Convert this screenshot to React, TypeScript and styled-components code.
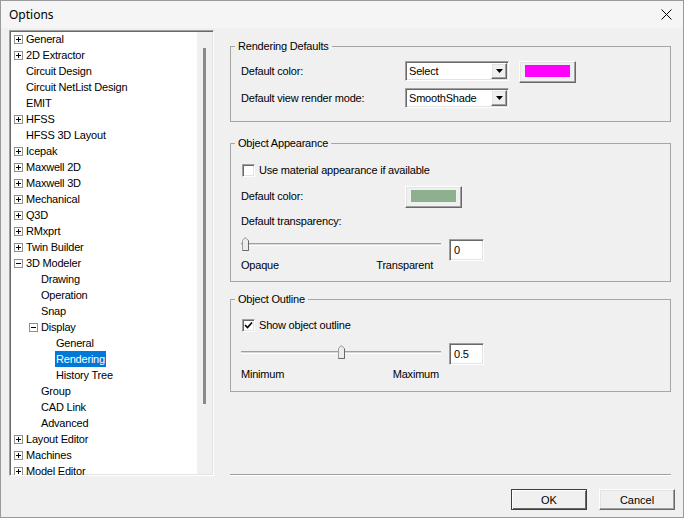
import React from 'react';
import styled, { createGlobalStyle, css } from 'styled-components';

const GlobalStyle = createGlobalStyle`
  html, body {
    margin: 0;
    padding: 0;
    background: #f0f0f0;
  }
  body {
    font-family: 'Liberation Sans', Arial, sans-serif;
    font-size: 11px;
    letter-spacing: -0.2px;
    color: #000;
  }
  * {
    box-sizing: border-box;
  }
`;

const raised = css`
  border: 1px solid;
  border-color: #fff #696969 #696969 #fff;
  box-shadow: inset -1px -1px #a0a0a0, inset 1px 1px #e3e3e3;
  background: #f0f0f0;
`;

const sunken = css`
  border: 1px solid;
  border-color: #a0a0a0 #fff #fff #a0a0a0;
  box-shadow: inset 1px 1px #696969, inset -1px -1px #e3e3e3;
  background: #fff;
`;

const Window = styled.div`
  width: 684px;
  height: 518px;
  border: 1px solid #9a9a9a;
  background: #f0f0f0;
  display: flex;
  flex-direction: column;
`;

const TitleBar = styled.div`
  height: 27px;
  flex: none;
  display: flex;
  align-items: center;
  justify-content: space-between;
  padding: 0 11px 0 8px;
  background: #f5f5f5;
  font-family: 'Noto Sans', 'Liberation Sans', sans-serif;
  font-size: 12px;
  letter-spacing: 0;
`;

const Main = styled.div`
  flex: none;
  height: 448px;
  display: flex;
  padding: 2px 12px 0 8px;
`;

/* ---------- tree ---------- */

const TreePanel = styled.div`
  ${sunken};
  width: 205px;
  height: 446px;
  display: flex;
  overflow: hidden;
`;

const TreeList = styled.div`
  flex: 1;
  overflow: hidden;
`;

const ScrollTrack = styled.div`
  width: 15px;
  flex: none;
  background: #f0f0f0;
  margin: 1px 1px 1px 0;
`;

const ScrollThumb = styled.div`
  width: 3px;
  height: 356px;
  margin: 16px 0 0 6px;
  background: #8a8a8a;
`;

const TreeRow = styled.div<{ $level: number }>`
  height: 16px;
  display: flex;
  align-items: center;
  white-space: nowrap;
  padding-left: ${(p) => 4 + p.$level * 15}px;
`;

const ExpanderSlot = styled.span`
  width: 12px;
  flex: none;
  display: flex;
  align-items: center;
`;

const TreeText = styled.span<{ $selected?: boolean }>`
  line-height: 16px;
  padding: 0 1px;
  margin-left: -1px;
  background: ${(p) => (p.$selected ? '#0078d7' : 'transparent')};
  color: ${(p) => (p.$selected ? '#fff' : '#000')};
`;

/* ---------- right side ---------- */

const RightCol = styled.div`
  width: 441px;
  margin-left: 16px;
  padding-top: 16px;
  display: flex;
  flex-direction: column;
`;

const GroupBox = styled.div<{ $pad: string; $top?: number }>`
  position: relative;
  border: 1px solid #a6a6a6;
  padding: ${(p) => p.$pad};
  margin-top: ${(p) => p.$top ?? 0}px;
`;

const GroupTitle = styled.span`
  position: absolute;
  top: -7px;
  left: 4px;
  padding: 0 3px;
  line-height: 13px;
  background: #f0f0f0;
`;

const FieldRow = styled.div<{ $height: number; $top?: number }>`
  display: flex;
  align-items: flex-start;
  height: ${(p) => p.$height}px;
  margin-top: ${(p) => p.$top ?? 0}px;
`;

const FieldLabel = styled.span<{ $width?: number }>`
  width: ${(p) => (p.$width ? `${p.$width}px` : 'auto')};
  flex: none;
  line-height: 20px;
`;

const PlainLabel = styled.div<{ $top?: number }>`
  line-height: 14px;
  margin-top: ${(p) => p.$top ?? 0}px;
`;

const Combo = styled.div`
  ${sunken};
  width: 104px;
  height: 20px;
  display: flex;
  padding: 1px;
`;

const ComboText = styled.span`
  flex: 1;
  padding-left: 2px;
  line-height: 16px;
`;

const ComboArrow = styled.span`
  ${raised};
  width: 16px;
  height: 16px;
  display: flex;
  align-items: center;
  justify-content: center;
`;

const ColorButton = styled.div<{ $left?: number }>`
  ${raised};
  width: 57px;
  height: 22px;
  padding: 3px 5px 5px 5px;
  margin-left: ${(p) => p.$left ?? 0}px;
`;

const Swatch = styled.div<{ $color: string }>`
  width: 100%;
  height: 100%;
  background: ${(p) => p.$color};
`;

const CheckRow = styled.label`
  display: flex;
  align-items: center;
  height: 14px;
  gap: 4px;
  padding-left: 1px;
`;

const CheckBox = styled.span`
  ${sunken};
  width: 13px;
  height: 13px;
  display: flex;
  align-items: center;
  justify-content: center;
`;

const SliderRow = styled.div<{ $top: number }>`
  display: flex;
  align-items: flex-start;
  margin-top: ${(p) => p.$top}px;
`;

const SliderCol = styled.div<{ $offset: number }>`
  width: 200px;
  padding-top: ${(p) => p.$offset}px;
`;

const Slider = styled.div`
  position: relative;
  height: 16px;
  padding-top: 6px;
`;

const Track = styled.div`
  height: 3px;
  border-top: 1px solid #a0a0a0;
  border-bottom: 1px solid #fff;
  background: #d6d6d6;
`;

const Thumb = styled.svg`
  position: absolute;
  top: 0;
`;

const ScaleLabels = styled.div<{ $top: number; $right: number }>`
  display: flex;
  justify-content: space-between;
  line-height: 14px;
  margin-top: ${(p) => p.$top}px;
  padding-right: ${(p) => p.$right}px;
`;

const TextBox = styled.div<{ $top: number }>`
  ${sunken};
  width: 35px;
  height: 22px;
  margin: ${(p) => p.$top}px 0 0 8px;
  padding-left: 4px;
  line-height: 20px;
`;

const Separator = styled.div`
  margin-top: auto;
  height: 2px;
  border-top: 1px solid #a0a0a0;
  border-bottom: 1px solid #fff;
`;

/* ---------- footer ---------- */

const Footer = styled.div`
  display: flex;
  justify-content: flex-end;
  gap: 12px;
  padding: 13px 8px 0 0;
`;

const Button = styled.button<{ $default?: boolean }>`
  ${raised};
  width: 76px;
  height: 21px;
  font: inherit;
  color: #000;
  padding: 0;
  ${(p) =>
    p.$default &&
    css`
      border-color: #3c3c3c;
      box-shadow: inset 1px 1px #fff, inset -1px -1px #696969;
    `}
`;

/* ---------- icons ---------- */

const Expander = ({ open }: { open: boolean }) => (
  <svg width="9" height="9" viewBox="0 0 9 9">
    <rect x="0.5" y="0.5" width="8" height="8" fill="#fff" stroke="#8f8f8f" />
    <path d="M2 4.5h5" stroke="#000" />
    {!open && <path d="M4.5 2v5" stroke="#000" />}
  </svg>
);

const CloseIcon = () => (
  <svg width="11" height="11" viewBox="0 0 11 11">
    <path d="M0.5 0.5l10 10M10.5 0.5l-10 10" stroke="#000" strokeWidth="1" />
  </svg>
);

const DownArrow = () => (
  <svg width="7" height="4" viewBox="0 0 7 4">
    <path d="M0 0h7L3.5 4z" fill="#000" />
  </svg>
);

const CheckMark = () => (
  <svg width="9" height="9" viewBox="0 0 9 9">
    <path d="M1 4l2.5 2.5L8 1.5" stroke="#000" strokeWidth="1.6" fill="none" />
  </svg>
);

const ThumbShape = ({ left }: { left: number }) => (
  <Thumb width="7" height="14" viewBox="0 0 7 14" style={{ left }}>
    <path d="M0.5 13.5V3.5L3 0.5L6.5 3.5V13.5Z" fill="#ececec" stroke="#9a9a9a" />
    <path d="M6.5 3.5V13.5H0.5" fill="none" stroke="#696969" />
  </Thumb>
);

/* ---------- data ---------- */

type TreeItem = { label: string; level: number; exp?: 'plus' | 'minus'; selected?: boolean };

const treeItems: TreeItem[] = [
  { label: 'General', level: 0, exp: 'plus' },
  { label: '2D Extractor', level: 0, exp: 'plus' },
  { label: 'Circuit Design', level: 0 },
  { label: 'Circuit NetList Design', level: 0 },
  { label: 'EMIT', level: 0 },
  { label: 'HFSS', level: 0, exp: 'plus' },
  { label: 'HFSS 3D Layout', level: 0 },
  { label: 'Icepak', level: 0, exp: 'plus' },
  { label: 'Maxwell 2D', level: 0, exp: 'plus' },
  { label: 'Maxwell 3D', level: 0, exp: 'plus' },
  { label: 'Mechanical', level: 0, exp: 'plus' },
  { label: 'Q3D', level: 0, exp: 'plus' },
  { label: 'RMxprt', level: 0, exp: 'plus' },
  { label: 'Twin Builder', level: 0, exp: 'plus' },
  { label: '3D Modeler', level: 0, exp: 'minus' },
  { label: 'Drawing', level: 1 },
  { label: 'Operation', level: 1 },
  { label: 'Snap', level: 1 },
  { label: 'Display', level: 1, exp: 'minus' },
  { label: 'General', level: 2 },
  { label: 'Rendering', level: 2, selected: true },
  { label: 'History Tree', level: 2 },
  { label: 'Group', level: 1 },
  { label: 'CAD Link', level: 1 },
  { label: 'Advanced', level: 1 },
  { label: 'Layout Editor', level: 0, exp: 'plus' },
  { label: 'Machines', level: 0, exp: 'plus' },
  { label: 'Model Editor', level: 0, exp: 'plus' },
];

const SLIDER_TRAVEL = 193;

const App = () => {
  const transparency = 0;
  const outline = 0.5;

  return (
    <>
      <GlobalStyle />
      <Window>
        <TitleBar>
          <span>Options</span>
          <CloseIcon />
        </TitleBar>

        <Main>
          <TreePanel>
            <TreeList>
              {treeItems.map((item, idx) => (
                <TreeRow key={idx} $level={item.level}>
                  <ExpanderSlot>{item.exp && <Expander open={item.exp === 'minus'} />}</ExpanderSlot>
                  <TreeText $selected={item.selected}>{item.label}</TreeText>
                </TreeRow>
              ))}
            </TreeList>
            <ScrollTrack>
              <ScrollThumb />
            </ScrollTrack>
          </TreePanel>

          <RightCol>
            <GroupBox $pad="14px 10px 13px 10px">
              <GroupTitle>Rendering Defaults</GroupTitle>
              <FieldRow $height={22}>
                <FieldLabel $width={164}>Default color:</FieldLabel>
                <Combo>
                  <ComboText>Select</ComboText>
                  <ComboArrow>
                    <DownArrow />
                  </ComboArrow>
                </Combo>
                <ColorButton $left={10}>
                  <Swatch $color="#ff00ff" />
                </ColorButton>
              </FieldRow>
              <FieldRow $height={20} $top={5}>
                <FieldLabel $width={164}>Default view render mode:</FieldLabel>
                <Combo>
                  <ComboText>SmoothShade</ComboText>
                  <ComboArrow>
                    <DownArrow />
                  </ComboArrow>
                </Combo>
              </FieldRow>
            </GroupBox>

            <GroupBox $pad="19px 10px 9px 10px" $top={21}>
              <GroupTitle>Object Appearance</GroupTitle>
              <CheckRow>
                <CheckBox />
                <span>Use material appearance if available</span>
              </CheckRow>
              <FieldRow $height={22} $top={9}>
                <FieldLabel $width={164}>Default color:</FieldLabel>
                <ColorButton>
                  <Swatch $color="#8fb08f" />
                </ColorButton>
              </FieldRow>
              <PlainLabel $top={6}>Default transparency:</PlainLabel>
              <SliderRow $top={9}>
                <SliderCol $offset={0}>
                  <Slider>
                    <Track />
                    <ThumbShape left={transparency * SLIDER_TRAVEL + 1} />
                  </Slider>
                  <ScaleLabels $top={5} $right={8}>
                    <span>Opaque</span>
                    <span>Transparent</span>
                  </ScaleLabels>
                </SliderCol>
                <TextBox $top={2}>{transparency}</TextBox>
              </SliderRow>
            </GroupBox>

            <GroupBox $pad="18px 10px 10px 10px" $top={17}>
              <GroupTitle>Object Outline</GroupTitle>
              <CheckRow>
                <CheckBox>
                  <CheckMark />
                </CheckBox>
                <span>Show object outline</span>
              </CheckRow>
              <SliderRow $top={11}>
                <SliderCol $offset={2}>
                  <Slider>
                    <Track />
                    <ThumbShape left={outline * SLIDER_TRAVEL} />
                  </Slider>
                  <ScaleLabels $top={6} $right={2}>
                    <span>Minimum</span>
                    <span>Maximum</span>
                  </ScaleLabels>
                </SliderCol>
                <TextBox $top={0}>{outline}</TextBox>
              </SliderRow>
            </GroupBox>

            <Separator />
          </RightCol>
        </Main>

        <Footer>
          <Button $default>OK</Button>
          <Button>Cancel</Button>
        </Footer>
      </Window>
    </>
  );
};

export default App;
